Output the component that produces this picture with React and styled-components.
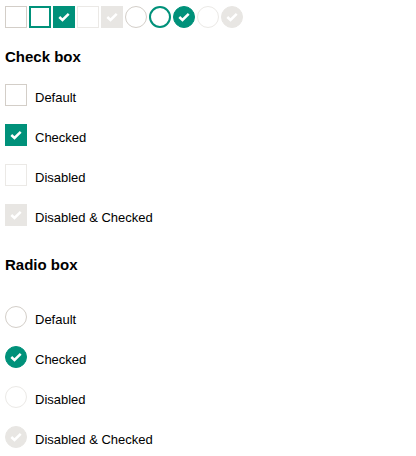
import React from "react";
import styled, { createGlobalStyle, css } from "styled-components";

const GlobalStyle = createGlobalStyle`
  body {
    margin: 0;
    background: #ffffff;
    font-family: "Liberation Sans", Arial, sans-serif;
    color: #000000;
  }
`;

const TEAL = "#00917a";

const Page = styled.div`
  padding: 6px 5px 0 5px;
`;

const Strip = styled.div`
  display: flex;
  gap: 2px;
`;

const Title = styled.h3`
  margin: ${(p) => p.$top}px 0 ${(p) => p.$bottom}px 0;
  font-size: 15px;
  line-height: 18px;
  font-weight: bold;
`;

const List = styled.div`
  display: flex;
  flex-direction: column;
  gap: 18px;
`;

const Row = styled.label`
  display: flex;
  align-items: flex-start;
  gap: 8px;
  font-size: 13px;
  line-height: 15px;
`;

const Text = styled.span`
  margin-top: 6px;
`;

const looks = {
  default: css`
    border: 1px solid #d3cec8;
    background: #ffffff;
  `,
  focus: css`
    border: 2px solid ${TEAL};
    background: #ffffff;
  `,
  checked: css`
    border: 1px solid ${TEAL};
    background: ${TEAL};
  `,
  disabled: css`
    border: 1px solid #ebe9e6;
    background: #ffffff;
  `,
  disabledChecked: css`
    border: 1px solid #e8e6e3;
    background: #e8e6e3;
  `,
};

const Box = styled.span`
  box-sizing: border-box;
  display: flex;
  align-items: center;
  justify-content: center;
  flex: none;
  width: 22px;
  height: 22px;
  border-radius: ${(p) => (p.$round ? "50%" : "0")};
  ${(p) => looks[p.$look]}
`;

const Tick = () => (
  <svg width="12" height="10" viewBox="0 0 12 10">
    <path
      d="M1.3 5 L4.5 8 L10.7 1.8"
      fill="none"
      stroke="#ffffff"
      strokeWidth="2.5"
    />
  </svg>
);

const Control = ({ look, round }) => (
  <Box $look={look} $round={round}>
    {(look === "checked" || look === "disabledChecked") && <Tick />}
  </Box>
);

const looksInStrip = ["default", "focus", "checked", "disabled", "disabledChecked"];

const items = [
  { look: "default", label: "Default" },
  { look: "checked", label: "Checked" },
  { look: "disabled", label: "Disabled" },
  { look: "disabledChecked", label: "Disabled & Checked" },
];

export default function App() {
  return (
    <Page>
      <GlobalStyle />
      <Strip>
        {looksInStrip.map((l) => (
          <Control key={"c" + l} look={l} />
        ))}
        {looksInStrip.map((l) => (
          <Control key={"r" + l} look={l} round />
        ))}
      </Strip>

      <Title $top={20} $bottom={18}>Check box</Title>
      <List>
        {items.map((it) => (
          <Row key={it.label}>
            <Control look={it.look} />
            <Text>{it.label}</Text>
          </Row>
        ))}
      </List>

      <Title $top={30} $bottom={32}>Radio box</Title>
      <List>
        {items.map((it) => (
          <Row key={it.label}>
            <Control look={it.look} round />
            <Text>{it.label}</Text>
          </Row>
        ))}
      </List>
    </Page>
  );
}
